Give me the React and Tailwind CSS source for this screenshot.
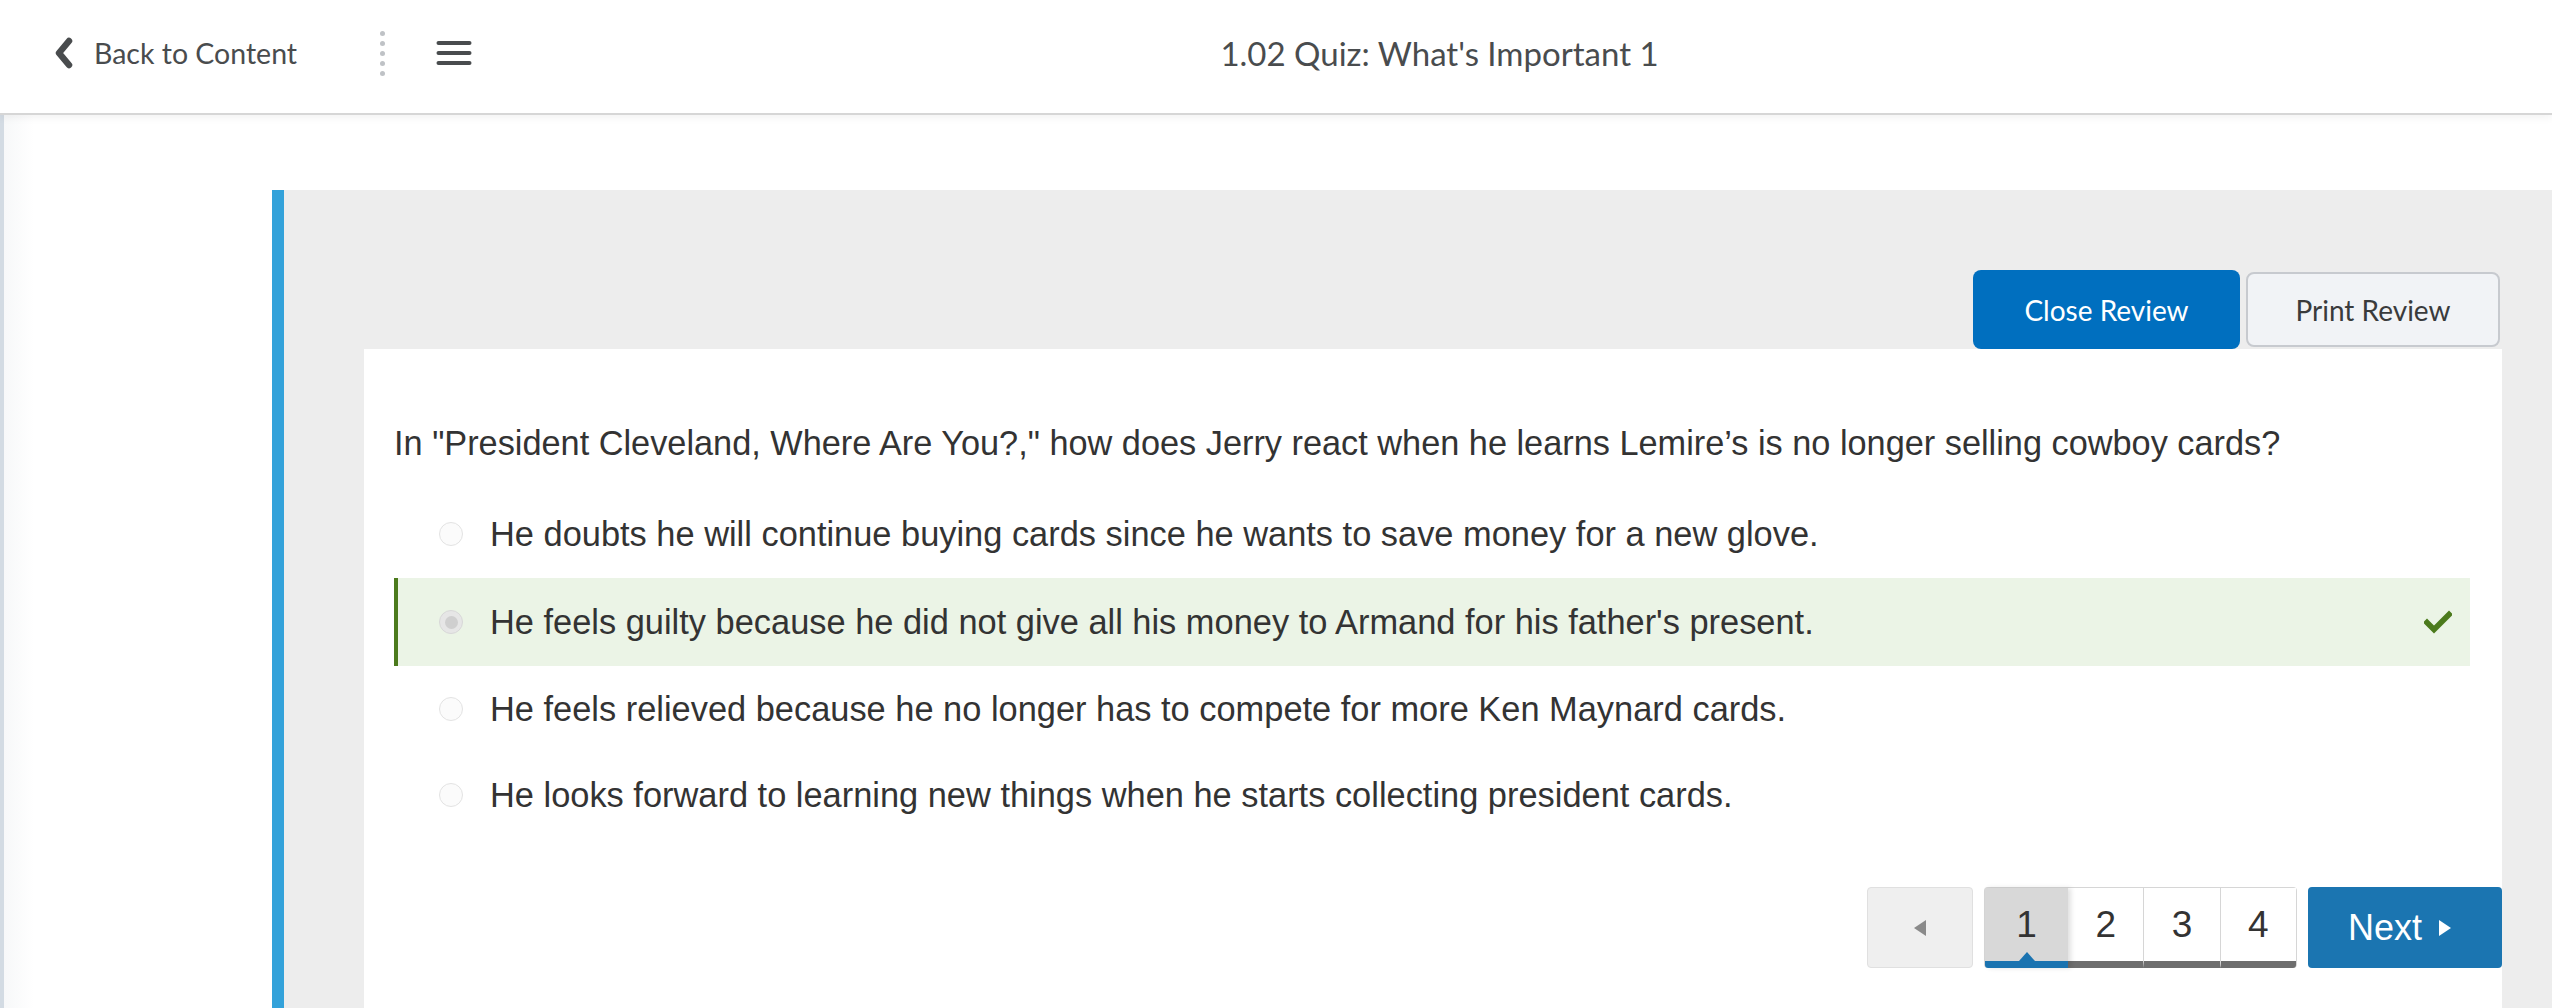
import React from "react";

function Chevron() {
  return (
    <svg width="20" height="32" viewBox="0 0 20 32" className="block">
      <path d="M15 4 L5 16 L15 28" fill="none" stroke="#494c4e" strokeWidth="6.5" strokeLinecap="round" strokeLinejoin="round" />
    </svg>
  );
}

function Hamburger() {
  return (
    <svg width="36" height="26" viewBox="0 0 36 26" className="block">
      <rect x="0.5" y="1" width="35" height="4" rx="2" fill="#494c4e" />
      <rect x="0.5" y="11" width="35" height="4" rx="2" fill="#494c4e" />
      <rect x="0.5" y="21" width="35" height="4" rx="2" fill="#494c4e" />
    </svg>
  );
}

function Check() {
  return (
    <svg width="28" height="24" viewBox="0 0 28 24" className="block">
      <path d="M3 12.5 L10 19.5 L25 4.5" fill="none" stroke="#4b7a1c" strokeWidth="5.5" strokeLinecap="square" strokeLinejoin="miter" />
    </svg>
  );
}

const options = [
  { text: "He doubts he will continue buying cards since he wants to save money for a new glove.", h: "h-[88px]" },
  { text: "He feels guilty because he did not give all his money to Armand for his father's present.", h: "h-[88px]", correct: true },
  { text: "He feels relieved because he no longer has to compete for more Ken Maynard cards.", h: "h-[86px]" },
  { text: "He looks forward to learning new things when he starts collecting president cards.", h: "h-[86px]" },
];

export default function App() {
  return (
    <div className="w-[2552px] h-[1008px] bg-white overflow-hidden flex flex-col">
      {/* Header */}
      <header className="relative z-10 h-[115px] shrink-0 border-b-2 border-[#d6d6d6] bg-white shadow-[0_3px_8px_rgba(0,0,0,0.05)] flex items-center pb-[7px] font-['Lato',sans-serif] text-[#494c4e]">
        <div className="w-[380px] shrink-0 flex items-center pl-[54px]">
          <Chevron />
          <span className="ml-[20px] text-[28.5px] leading-none">Back to Content</span>
        </div>
        <div className="w-[5px] shrink-0 flex flex-col items-center gap-[5px]">
          <span className="w-[5px] h-[5px] rounded-full bg-[#bfc2c6]" />
          <span className="w-[5px] h-[5px] rounded-full bg-[#bfc2c6]" />
          <span className="w-[5px] h-[5px] rounded-full bg-[#bfc2c6]" />
          <span className="w-[5px] h-[5px] rounded-full bg-[#bfc2c6]" />
          <span className="w-[5px] h-[5px] rounded-full bg-[#bfc2c6]" />
        </div>
        <div className="ml-[51px] shrink-0">
          <Hamburger />
        </div>
        <div className="w-[1935px] shrink-0 text-center text-[33px] leading-none">
          1.02 Quiz: What's Important 1
        </div>
      </header>

      {/* Main */}
      <div className="flex-1 flex border-l-4 border-[#d3dbe3] min-h-0">
        <div className="w-[268px] shrink-0 bg-gradient-to-r from-[#f7f8f9] to-white to-[30px]" />
        <div className="flex-1 mt-[75px] border-l-[12px] border-[#33a2da] bg-[#ededed] pl-[80px] pr-[50px] pt-[80px] flex flex-col min-h-0">
          {/* Buttons */}
          <div className="flex justify-end items-end h-[79px] shrink-0 pr-[2px] font-['Lato',sans-serif] text-[28px]">
            <button className="w-[267px] h-[79px] rounded-[8px] bg-[#006fbf] text-white">Close Review</button>
            <button className="ml-[6px] mb-[2px] w-[254px] h-[75px] rounded-[8px] border-2 border-[#c7cacf] bg-[#f1f3f6] text-[#3a3b3c]">Print Review</button>
          </div>

          {/* Card */}
          <div className="flex-1 bg-white pl-[30px] pt-[70px] font-['Liberation_Sans',Arial,Helvetica,sans-serif] text-[#333333]">
            <div className="pr-[32px]">
              <p className="text-[34.3px] leading-[48px]">
                In "President Cleveland, Where Are You?," how does Jerry react when he learns Lemire’s is no longer selling cowboy cards?
              </p>
              <div className="mt-[23px] flex flex-col">
                {options.map((o, i) => (
                  <div
                    key={i}
                    className={
                      o.correct
                        ? `${o.h} flex items-center border-l-4 border-[#4b7a1c] bg-[#ebf4e6] pl-[41px] pr-[18px]`
                        : `${o.h} flex items-center border-l-4 border-transparent pl-[41px] pr-[18px]`
                    }
                  >
                    {o.correct ? (
                      <span className="w-[24px] h-[24px] shrink-0 rounded-full border border-[#d8d8d8] bg-[#e6e6e6] flex items-center justify-center">
                        <span className="w-[13px] h-[13px] rounded-full bg-[#cfcfcf]" />
                      </span>
                    ) : (
                      <span className="w-[24px] h-[24px] shrink-0 rounded-full border border-[#e3e3e3] bg-[#fbfbfb]" />
                    )}
                    <span className="ml-[27px] text-[34.4px] leading-[48px] flex-1">{o.text}</span>
                    {o.correct && <Check />}
                  </div>
                ))}
              </div>
            </div>

            {/* Pagination */}
            <div className="mt-[49px] flex justify-end items-stretch h-[81px]">
              <div className="w-[106px] rounded-[4px] border border-[#e0e0e0] bg-[#efefef] flex items-center justify-center">
                <svg width="16" height="20" viewBox="0 0 16 20">
                  <path d="M14 2 L2 10 L14 18 Z" fill="#8a8a8a" />
                </svg>
              </div>
              <div className="ml-[11px] w-[313px] flex rounded-[4px] border border-[#d6d6d6] border-b-0 overflow-visible text-[37px] text-[#333]">
                <div className="relative w-[83px] bg-[#d8d8d8] border-b-[7px] border-[#1a73b0] rounded-bl-[3px] flex items-center justify-center shadow-[3px_0_5px_rgba(0,0,0,0.12)] z-10">
                  1
                  <span className="absolute bottom-0 left-1/2 -translate-x-1/2 w-0 h-0 border-l-[8px] border-r-[8px] border-b-[9px] border-l-transparent border-r-transparent border-b-[#1a73b0]" />
                </div>
                <div className="flex-1 bg-white border-b-[7px] border-[#6e6e6e] flex items-center justify-center">2</div>
                <div className="flex-1 bg-white border-l border-l-[#d6d6d6] border-b-[7px] border-b-[#6e6e6e] flex items-center justify-center">3</div>
                <div className="flex-1 bg-white border-l border-l-[#d6d6d6] border-b-[7px] border-b-[#6e6e6e] rounded-br-[3px] flex items-center justify-center">4</div>
              </div>
              <div className="ml-[11px] w-[194px] rounded-[4px] bg-[#1b75b1] text-white text-[36px] flex items-center pl-[40px]">
                <span>Next</span>
                <svg width="14" height="18" viewBox="0 0 14 18" className="ml-[16px]">
                  <path d="M1 1 L13 9 L1 17 Z" fill="#ffffff" />
                </svg>
              </div>
            </div>
          </div>
        </div>
      </div>
    </div>
  );
}
